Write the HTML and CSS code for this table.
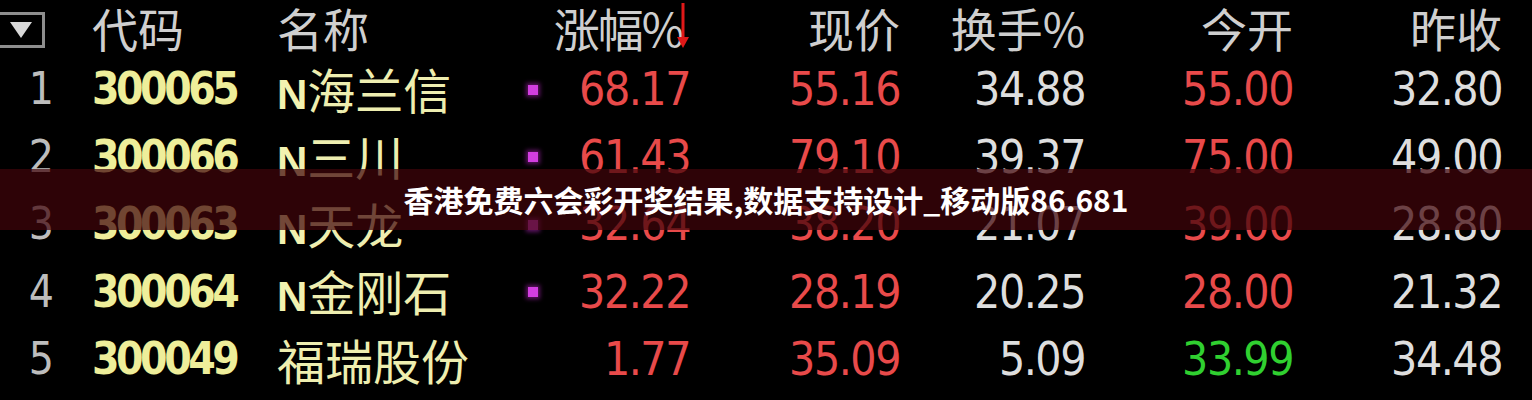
FILE: index.html
```html
<!DOCTYPE html>
<html lang="zh-CN">
<head>
<meta charset="utf-8">
<title>行情</title>
<link rel="stylesheet" href="styles.css">
</head>
<body>
<div class="board">
  <div class="row head">
    <div class="c0"><span class="sortbox"><svg width="26" height="20" viewBox="0 0 26 20"><polygon points="2,2 24,2 13,18" fill="#d8d8d8"/></svg></span></div>
    <div class="c1 cjk">代码</div>
    <div class="c2 cjk">名称</div>
    <div class="c3"></div>
    <div class="c4 cjk sorted"><span>涨幅%</span><svg class="arrow" width="14" height="46" viewBox="0 0 14 46"><line x1="7" y1="0" x2="7" y2="38" stroke="#e01818" stroke-width="3"/><polygon points="1,34 13,34 7,45" fill="#e01818"/></svg></div>
    <div class="c5 cjk">现价</div>
    <div class="c6 cjk">换手%</div>
    <div class="c7 cjk">今开</div>
    <div class="c8 cjk">昨收</div>
  </div>

  <div class="row">
    <div class="c0 idx">1</div>
    <div class="c1 code">300065</div>
    <div class="c2 name"><b>N</b>海兰信</div>
    <div class="c3"><span class="mark"></span></div>
    <div class="c4 num up">68.17</div>
    <div class="c5 num up">55.16</div>
    <div class="c6 num">34.88</div>
    <div class="c7 num up">55.00</div>
    <div class="c8 num">32.80</div>
  </div>
  <div class="row">
    <div class="c0 idx">2</div>
    <div class="c1 code">300066</div>
    <div class="c2 name"><b>N</b>三川</div>
    <div class="c3"><span class="mark"></span></div>
    <div class="c4 num up">61.43</div>
    <div class="c5 num up">79.10</div>
    <div class="c6 num">39.37</div>
    <div class="c7 num up">75.00</div>
    <div class="c8 num">49.00</div>
  </div>
  <div class="row">
    <div class="c0 idx">3</div>
    <div class="c1 code">300063</div>
    <div class="c2 name"><b>N</b>天龙</div>
    <div class="c3"><span class="mark"></span></div>
    <div class="c4 num up">32.64</div>
    <div class="c5 num up">38.20</div>
    <div class="c6 num">21.07</div>
    <div class="c7 num up">39.00</div>
    <div class="c8 num">28.80</div>
  </div>
  <div class="row">
    <div class="c0 idx">4</div>
    <div class="c1 code">300064</div>
    <div class="c2 name"><b>N</b>金刚石</div>
    <div class="c3"><span class="mark"></span></div>
    <div class="c4 num up">32.22</div>
    <div class="c5 num up">28.19</div>
    <div class="c6 num">20.25</div>
    <div class="c7 num up">28.00</div>
    <div class="c8 num">21.32</div>
  </div>
  <div class="row">
    <div class="c0 idx">5</div>
    <div class="c1 code">300049</div>
    <div class="c2 name">福瑞股份</div>
    <div class="c3"></div>
    <div class="c4 num up">1.77</div>
    <div class="c5 num up">35.09</div>
    <div class="c6 num">5.09</div>
    <div class="c7 num down">33.99</div>
    <div class="c8 num">34.48</div>
  </div>

  <div class="banner">香港免费六会彩开奖结果,数据支持设计_移动版86.681</div>
</div>
</body>
</html>
```

FILE: styles.css
```css
html, body {
  margin: 0;
  padding: 0;
  background: #000;
}
body {
  width: 1532px;
  height: 400px;
  overflow: hidden;
}
.board {
  position: relative;
  width: 1532px;
  height: 400px;
  background: #000;
  font-family: "Liberation Sans Narrow", "DejaVu Sans Condensed", "Liberation Sans", sans-serif;
}
.row {
  display: grid;
  grid-template-columns: 60px 217px 223px 66px 124px 210px 185px 208px 209px;
  align-items: center;
  height: 67.5px;
}
.row.head {
  height: 56px;
}
.c0 { text-align: right; padding-right: 6px; }
.c1 { padding-left: 32px; }
.c3 { display: flex; justify-content: center; }
.c4, .c5, .c6, .c7, .c8 { text-align: right; }

.cjk {
  font-family: "Noto Sans CJK SC", sans-serif;
  font-size: 46px;
  line-height: 1.2;
  color: #cfcfcf;
  font-weight: 400;
  white-space: nowrap;
}
.head .c0 {
  text-align: left;
  padding: 0;
}
.sortbox {
  display: flex;
  align-items: center;
  justify-content: center;
  width: 42px;
  height: 30px;
  border: 3px solid #8e8e8e;
  border-left: none;
  margin-top: 4px;
}
.sorted {
  display: flex;
  justify-content: flex-end;
  align-items: center;
  position: relative;
  padding-right: 8px;
}
.sorted span {
  letter-spacing: -2px;
}
.sorted .arrow {
  position: absolute;
  right: 0;
  top: 3px;
}
.idx {
  font-size: 44px;
  color: #bdbdbd;
  line-height: 1.2;
}
.code {
  font-size: 44px;
  font-weight: 700;
  color: #eeee9a;
  line-height: 1.2;
  letter-spacing: -3.5px;
}
.name {
  font-family: "Noto Sans CJK SC", sans-serif;
  font-size: 48px;
  color: #eeeeb0;
  line-height: 1.2;
  white-space: nowrap;
}
.name b {
  font-family: "Liberation Sans", sans-serif;
  font-size: 42px;
  font-weight: 700;
  color: #f2f2b0;
}
.mark {
  display: block;
  width: 10px;
  height: 10px;
  background: #d23ee0;
  box-shadow: 0 0 4px 2px rgba(190, 40, 200, 0.5);
}
.num {
  font-size: 46px;
  line-height: 1.2;
  color: #dedede;
  letter-spacing: -1.5px;
}
.num.up { color: #e84a4a; }
.num.down { color: #30d030; }

.banner {
  position: absolute;
  left: 0;
  right: 0;
  top: 169px;
  height: 61px;
  display: flex;
  align-items: center;
  justify-content: center;
  background: rgba(64, 4, 10, 0.72);
  color: #ffffff;
  font-family: "Noto Sans CJK SC", "Noto Sans", sans-serif;
  font-weight: 700;
  font-size: 30px;
  padding-bottom: 2px;
  box-sizing: border-box;
}
```
